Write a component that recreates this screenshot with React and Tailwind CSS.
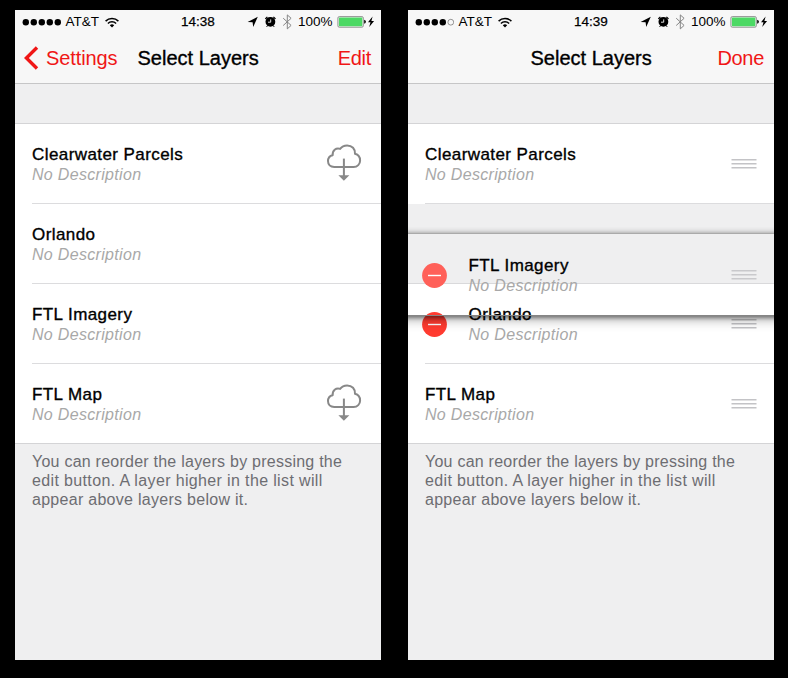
import React from "react";

function Dots({ filled }) {
  return (
    <svg width="39" height="9" viewBox="0 0 39 9" className="shrink-0">
      {[0, 1, 2, 3, 4].map((i) => (
        <circle key={i} cx={3.8 + i * 8} cy="4.2" r={i < filled ? 3.2 : 2.9} fill={i < filled ? "#000" : "none"} stroke={i < filled ? "none" : "#555"} strokeWidth="0.6" />
      ))}
    </svg>
  );
}

function Wifi() {
  return (
    <svg width="14" height="11" viewBox="0 0 14 11" fill="none" stroke="#000" strokeWidth="1.5">
      <path d="M.6 4.1a9.1 9.1 0 0 1 12.8 0" />
      <path d="M2.9 6.5a5.9 5.9 0 0 1 8.2 0" />
      <path d="M7 10.6 4.8 8.3a3.2 3.2 0 0 1 4.4 0Z" fill="#000" stroke="none" />
    </svg>
  );
}

function StatusIcons() {
  return (
    <svg width="50" height="18" viewBox="246 13 50 18">
      <path d="M257.8 16.8 253.2 27 252.6 22.3 247.6 21.9Z" fill="#000" />
      <circle cx="270.4" cy="21.8" r="4.9" fill="#000" />
      <g fill="none" stroke="#000">
        <path d="M265.3 18.900 267.400 16.900M273.400 16.900l2.100 2" strokeWidth="1.3" />
        <path d="M268 22.200h2.700v-2.800" stroke="#f7f7f7" strokeWidth="0.9" />
        <path d="m267.400 25.900-.8 1M273.400 25.900l.8 1" strokeWidth="1" />
      </g>
      <path d="m283.200 18.200 7.900 7.200-3.800 3.500V14.900l3.800 3.400-7.900 7.200" fill="none" stroke="#858585" strokeWidth="1" />
    </svg>
  );
}

function Battery() {
  return (
    <svg width="38" height="14" viewBox="337 15 38 14">
      <rect x="337.9" y="16.6" width="25.4" height="10.6" rx="1.4" fill="#f7f7f7" stroke="#777" strokeWidth="0.8" />
      <rect x="338.9" y="17.6" width="23.4" height="8.6" rx="0.4" fill="#4cd964" />
      <path d="M364.2 19.8q1.7.5 1.7 2t-1.7 2Z" fill="#000" />
      <path d="m372.6 16.4-4.6 5.9h2.5l-1.3 4.8 4.9-6.2h-2.7Z" fill="#000" />
    </svg>
  );
}

function StatusBar({ filled, time }) {
  return (
    <div className="flex h-[24px] items-center text-[13.5px] leading-6">
      <div className="flex w-[166px] items-center pl-[7px]">
        <Dots filled={filled} />
        <span className="ml-[4.5px] mr-[5.5px] w-[34px]">AT&amp;T</span>
        <Wifi />
      </div>
      <span className="w-[65px] [-webkit-text-stroke:0.25px_black]">{time}</span>
      <StatusIcons />
      <span className="ml-[2px] w-[39px]">100%</span>
      <Battery />
    </div>
  );
}

function Cloud() {
  return (
    <svg width="36" height="40" viewBox="326 142 36 40" fill="none" stroke="#888" strokeWidth="2" strokeLinejoin="round">
      <path d="M334.2 167c-3.9 0-6.2-2.5-6.2-5.9 0-3 1.900-5.300 4.700-5.900-.5-4.700 3.300-7.600 7.400-6.300 1.600-2.300 4.100-3.500 7-3.500 4.900 0 8.300 3.500 7.900 8.400 3.200.9 5.100 3.500 5.100 6.600 0 3.700-2.700 6.600-6.500 6.600Z" />
      <path d="M343.9 158.6V176" />
      <path d="M338.4 175.2h11l-5.500 5.500Z" fill="#888" stroke="none" />
    </svg>
  );
}

function Handle({ light }) {
  return (
    <svg width="26" height="12" viewBox="0 0 26 12" stroke={light ? "#c9c9cc" : "#c3c3c6"} strokeWidth="1.5">
      <path d="M.5 1.7h25M.5 5.7h25M.5 9.7h25" />
    </svg>
  );
}

function Remove({ light }) {
  return (
    <svg width="25" height="25" viewBox="0 0 25 25" className="shrink-0">
      <circle cx="12.5" cy="12.5" r="12.4" fill={light ? "#ff6059" : "#ff3b30"} />
      <path d="M6 12.5h13" stroke="#fff" strokeWidth="1.4" />
    </svg>
  );
}

function Label({ name }) {
  return (
    <div className="grow">
      <div className="text-[17px] leading-5 tracking-[0.42px] [-webkit-text-stroke:0.35px_black]">{name}</div>
      <div className="text-[16px] italic leading-5 tracking-[0.32px] text-[#a8a8a8]">No Description</div>
    </div>
  );
}

function Row({ name, icon, last, remove }) {
  return (
    <div className="h-[80px] pl-[17px]">
      <div className={last ? "flex h-full pt-[21px]" : "flex h-full border-b border-[#dcdcde] pt-[21px]"}>
        {remove && <div className="-ml-[3px] w-[46.5px] shrink-0 pt-[7px]"><Remove /></div>}
        <Label name={name} />
        {icon === "cloud" && <div className="-mt-[3px] mr-[19px]"><Cloud /></div>}
        {icon === "handle" && <div className="mr-[17px] pt-[13px]"><Handle /></div>}
      </div>
    </div>
  );
}

function Footer() {
  return (
    <p className="border-t border-[#d4d4d6] pl-[17px] pt-[8px] text-[16px] leading-[19px] tracking-[0.24px] text-[#6d6d72]">
      You can reorder the layers by pressing the<br />
      <span className="tracking-[0.36px]">edit button. A layer higher in the list will</span><br />
      <span className="tracking-[0.28px]">appear above layers below it.</span>
    </p>
  );
}

function Phone({ filled, time, back, action, children }) {
  return (
    <section className="relative h-[650px] w-[366px] overflow-hidden bg-[#efeff0]">
      <header className="h-[74px] border-b border-[#c6c6c7] bg-[#f7f7f7]">
        <StatusBar filled={filled} time={time} />
        <nav className="grid h-[48px] grid-cols-[122.5px_1fr_auto] items-center pr-[10px] text-[20px] text-[#f01616]">
          <div className="flex items-center pl-[9px]">
            {back && (
              <>
                <svg width="15" height="24" viewBox="0 0 15 24" fill="none" stroke="#f01616" strokeWidth="3.4"><path d="M13 1.5 2.4 12 13 22.5" /></svg>
                <span className="ml-[7px] tracking-[-0.1px]">Settings</span>
              </>
            )}
          </div>
          <h1 className="text-black [-webkit-text-stroke:0.35px_black]">Select Layers</h1>
          <span className="tracking-[-0.3px]">{action}</span>
        </nav>
      </header>
      <div className="h-[39px]" />
      {children}
      <Footer />
    </section>
  );
}

export default function App() {
  return (
    <main className="flex h-[678px] w-[788px] gap-[27px] bg-black pl-[15px] pt-[10px] font-['Liberation_Sans',Arial,sans-serif] text-black">
      <Phone filled={5} time="14:38" back action="Edit">
        <div className="h-[320px] border-t border-[#d4d4d6] bg-white">
          <Row name="Clearwater Parcels" icon="cloud" />
          <Row name="Orlando" />
          <Row name="FTL Imagery" />
          <Row name="FTL Map" icon="cloud" last />
        </div>
      </Phone>
      <Phone filled={4} time="14:39" action="Done">
        <div className="relative h-[320px] border-t border-[#d4d4d6] bg-white">
          <Row name="Clearwater Parcels" icon="handle" />
          <div className="h-[80px] border-b border-[#d9d9db] bg-[#efeff0]" />
          <Row name="Orlando" icon="handle" remove />
          <div className="h-[79px] overflow-hidden"><Row name="FTL Map" icon="handle" last /></div>
          <div className="absolute inset-x-[-14px] top-[109px] flex h-[83px] border-y border-t-[#aaaaaa] border-b-[#858585] pl-[28px] pt-[22px] shadow-[0_-1px_5px_rgba(0,0,0,0.2),0_2px_4px_rgba(0,0,0,0.38),0_5px_10px_rgba(0,0,0,0.25)]">
            <div className="w-[46.5px] shrink-0 pt-[7px]"><Remove light /></div>
            <Label name="FTL Imagery" />
            <div className="mr-[31px] pt-[13px]"><Handle light /></div>
          </div>
        </div>
      </Phone>
    </main>
  );
}
